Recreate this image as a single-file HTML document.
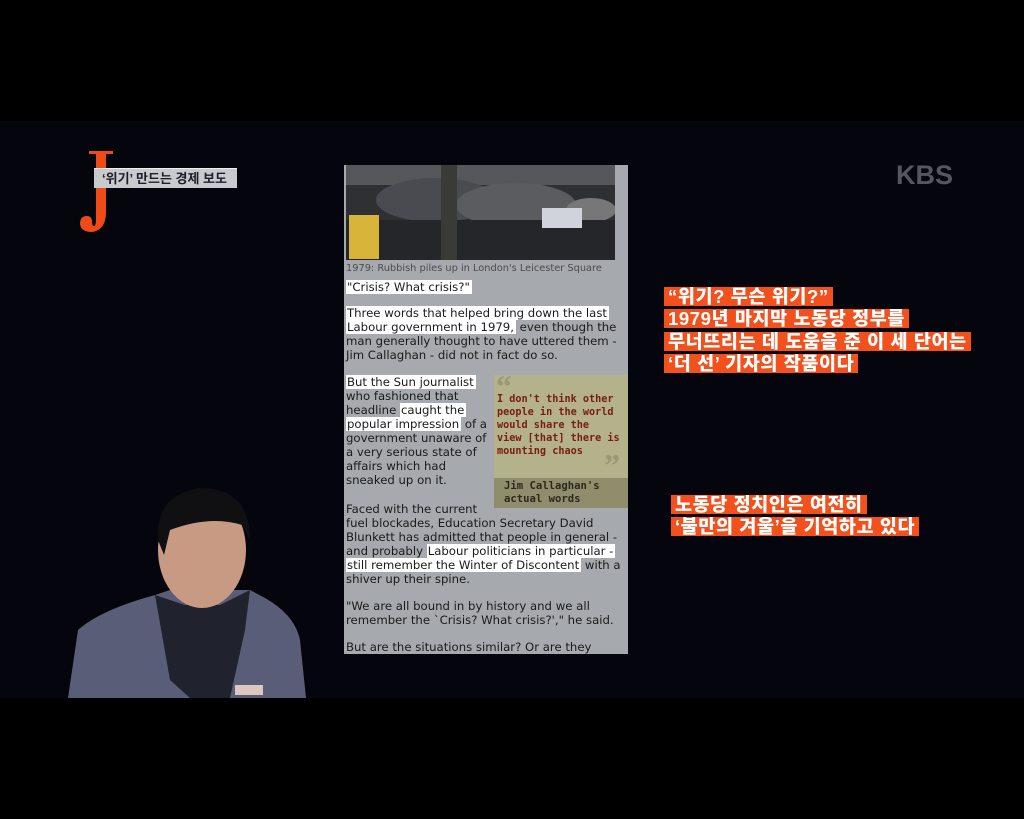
<!DOCTYPE html>
<html><head><meta charset="utf-8"><style>
*{margin:0;padding:0;box-sizing:border-box}
body{width:1024px;height:819px;background:#000;position:relative;overflow:hidden;font-family:"Liberation Sans","Noto Sans CJK KR",sans-serif}
.vid{position:absolute;left:0;top:121px;width:1024px;height:577px;background:#05060d}
.panel{position:absolute;left:344px;top:165px;width:284px;height:489px;background:#a6a9ae;overflow:hidden}
.l{position:absolute;left:2px;font-family:"DejaVu Sans",sans-serif;font-size:11.7px;color:#1a1a1a;white-space:nowrap;line-height:14px}
.w{background:#fff;padding:0 2px 0 1px}
.q{position:absolute;left:150px;top:210px;width:134px;height:133px;background:#b3b28a}
.q2{position:absolute;left:150px;top:313px;width:134px;height:30px;background:#8f8d6c}
.ql{position:absolute;left:153px;font-family:"DejaVu Sans Mono","Liberation Mono",monospace;font-weight:bold;font-size:10.2px;color:#7a1c10;white-space:nowrap;line-height:13px}
.qb{position:absolute;left:160px;font-family:"DejaVu Sans Mono",monospace;font-weight:bold;font-size:10.6px;color:#2a2a1c;white-space:nowrap}
.cap{position:absolute;background:#f2501c;color:#fff;font-weight:900;font-size:18.5px;line-height:19px;height:19px;padding:0 4px;white-space:nowrap;letter-spacing:0.6px;overflow:hidden}
</style></head><body>
<div class="vid"></div>
<!-- J logo -->
<svg style="position:absolute;left:78px;top:150px" width="40" height="84">
<rect x="11" y="1" width="24" height="3" fill="#f04a18"/>
<path d="M17 4 L28 4 L28 62 Q28 80 14 82 Q3 82 2 74 Q2 66 9 66 Q14 66 14 72 Q14 76 16 76 Q18 76 18 68 L18 4 Z" fill="#f04a18"/>
</svg>
<div style="position:absolute;left:94px;top:168px;width:143px;height:20px;background:#c8cacd;border-top:1px solid #eee;color:#1b1e2a;font-weight:bold;font-size:13px;line-height:19px;padding-left:8px">‘위기’ 만드는 경제 보도</div>
<div style="position:absolute;left:896px;top:160px;color:#55575f;font-weight:bold;font-size:27px;letter-spacing:0px">KBS</div>
<!-- presenter -->
<svg style="position:absolute;left:60px;top:480px" width="260" height="218">
<path d="M8 218 L18 150 Q40 130 95 115 L110 110 L190 110 L205 118 Q235 135 240 160 L246 218 Z" fill="#5a5d78"/>
<path d="M95 115 L110 200 L130 218 L170 218 L185 150 L190 110 L160 125 L125 125 Z" fill="#20222e"/>
<ellipse cx="142" cy="70" rx="44" ry="58" fill="#c89a84"/>
<path d="M98 60 Q95 15 140 8 Q190 8 190 60 L182 45 Q150 35 110 50 L104 75 Z" fill="#101012"/>
<rect x="175" y="205" width="28" height="10" fill="#ddc8c0"/>
</svg>
<!-- panel -->
<div class="panel">
<svg style="position:absolute;left:2px;top:0" width="269" height="95">
<rect width="269" height="95" fill="#2f3033"/>
<rect x="0" y="0" width="269" height="20" fill="#55575a"/>
<ellipse cx="90" cy="35" rx="60" ry="22" fill="#4a4b50"/>
<ellipse cx="170" cy="40" rx="60" ry="22" fill="#5b5c60"/>
<ellipse cx="245" cy="45" rx="25" ry="12" fill="#777"/>
<rect x="0" y="55" width="269" height="40" fill="#252629"/>
<rect x="95" y="0" width="16" height="95" fill="#3a3b36"/>
<rect x="3" y="50" width="30" height="44" fill="#d8b43a"/>
<rect x="196" y="43" width="40" height="20" fill="#d0d2dc"/>
</svg>
<div class="l" style="top:97px;font-size:9.8px;color:#4a4b4e">1979: Rubbish piles up in London's Leicester Square</div>
<div class="l" style="top:115px"><span class="w">"Crisis? What crisis?"</span></div>
<div class="l" style="top:141px"><span class="w">Three words that helped bring down the last</span></div>
<div class="l" style="top:155px"><span class="w">Labour government in 1979,</span> even though the</div>
<div class="l" style="top:169px">man generally thought to have uttered them -</div>
<div class="l" style="top:183px">Jim Callaghan - did not in fact do so.</div>
<div class="q"></div><div class="q2"></div>
<div style="position:absolute;left:152px;top:203px;font-family:'Liberation Serif',serif;font-weight:bold;font-size:32px;color:#9a9877">“</div>
<div style="position:absolute;left:260px;top:282px;font-family:'Liberation Serif',serif;font-weight:bold;font-size:32px;color:#9a9877">”</div>
<div class="ql" style="top:228px">I don't think other</div>
<div class="ql" style="top:241px">people in the world</div>
<div class="ql" style="top:254px">would share the</div>
<div class="ql" style="top:267px">view [that] there is</div>
<div class="ql" style="top:280px">mounting chaos</div>
<div class="qb" style="top:315px">Jim Callaghan's</div>
<div class="qb" style="top:328px">actual words</div>
<div class="l" style="top:210px"><span class="w">But the Sun journalist</span></div>
<div class="l" style="top:224px">who fashioned that</div>
<div class="l" style="top:238px">headline <span class="w">caught the</span></div>
<div class="l" style="top:252px"><span class="w">popular impression</span> of a</div>
<div class="l" style="top:266px">government unaware of</div>
<div class="l" style="top:280px">a very serious state of</div>
<div class="l" style="top:294px">affairs which had</div>
<div class="l" style="top:308px">sneaked up on it.</div>
<div class="l" style="top:337px">Faced with the current</div>
<div class="l" style="top:351px">fuel blockades, Education Secretary David</div>
<div class="l" style="top:365px">Blunkett has admitted that people in general -</div>
<div class="l" style="top:379px">and probably <span class="w">Labour politicians in particular -</span></div>
<div class="l" style="top:393px"><span class="w">still remember the Winter of Discontent</span> with a</div>
<div class="l" style="top:407px">shiver up their spine.</div>
<div class="l" style="top:434px">"We are all bound in by history and we all</div>
<div class="l" style="top:448px">remember the `Crisis? What crisis?'," he said.</div>
<div class="l" style="top:475px">But are the situations similar? Or are they</div>
</div>
<!-- captions -->
<div class="cap" style="left:664px;top:287px">“위기? 무슨 위기?”</div>
<div class="cap" style="left:664px;top:309px">1979년 마지막 노동당 정부를</div>
<div class="cap" style="left:664px;top:332px">무너뜨리는 데 도움을 준 이 세 단어는</div>
<div class="cap" style="left:664px;top:354px">‘더 선’ 기자의 작품이다</div>
<div class="cap" style="left:671px;top:495px">노동당 정치인은 여전히</div>
<div class="cap" style="left:671px;top:517px">‘불만의 겨울’을 기억하고 있다</div>
</body></html>
